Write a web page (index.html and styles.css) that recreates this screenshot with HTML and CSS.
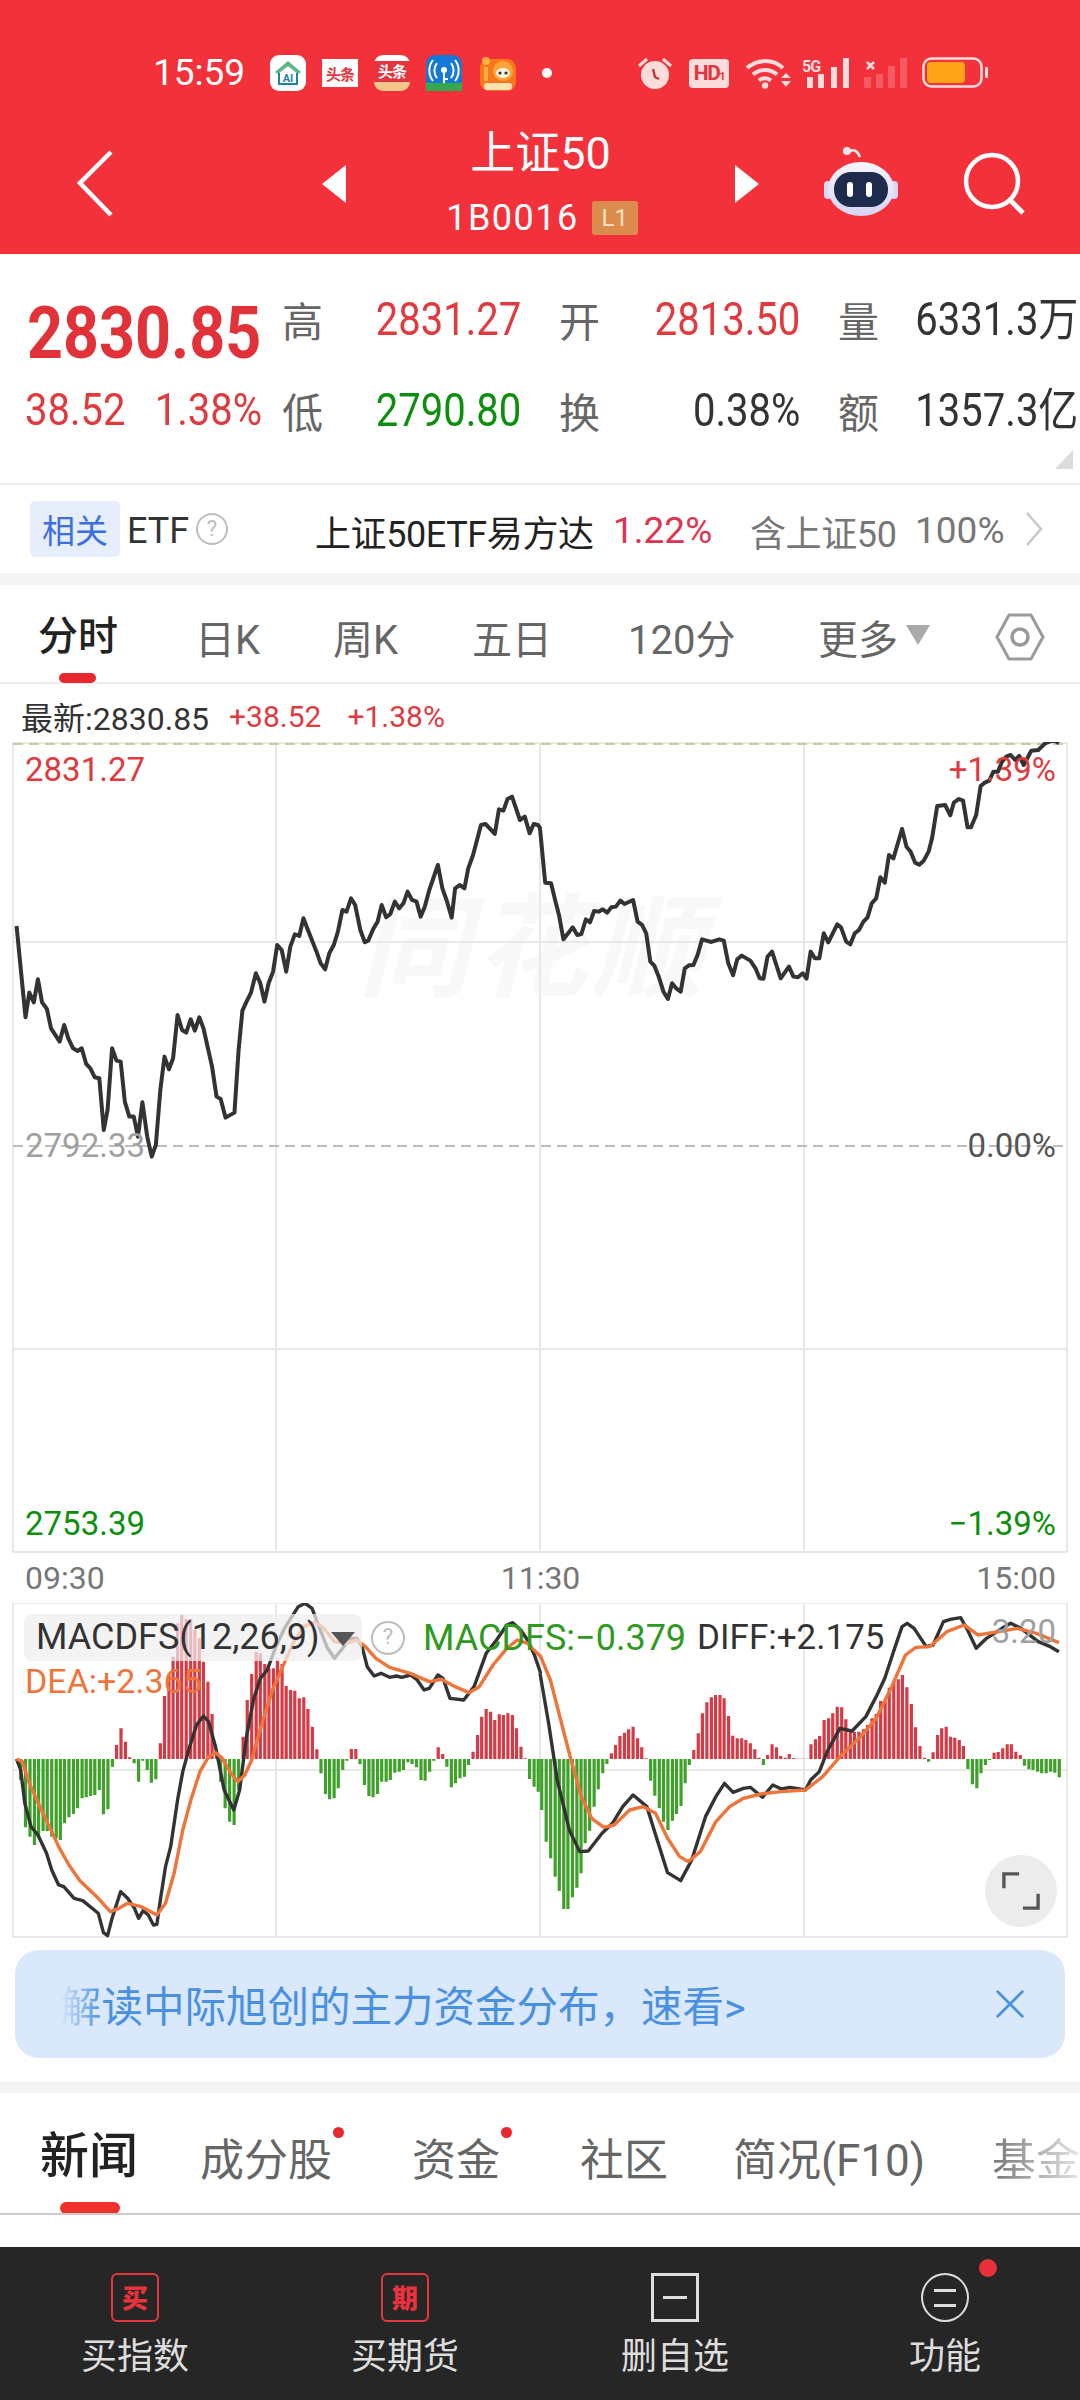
FILE: index.html
```html
<!DOCTYPE html>
<html lang="zh-CN">
<head>
<meta charset="utf-8">
<title>上证50</title>
<link rel="stylesheet" href="styles.css">
</head>
<body>
<div class="page">
  <header class="head">
    <div class="status">
      <span class="time">15:59</span>
      <div class="apps">
        <svg class="app" viewBox="0 0 36 36"><rect width="36" height="36" rx="9" fill="#fff"/><path d="M5 17 18 6l13 11-3 2-10-8-10 8z" fill="#5fb58a"/><path d="M9 18v11h18V18" fill="none" stroke="#1f7fb0" stroke-width="2"/><text x="18" y="27" class="t-ai">AI</text></svg>
        <div class="app toutiao"><span>头条</span></div>
        <div class="app toutiao2"><span>头条</span><i></i></div>
        <svg class="app" viewBox="0 0 36 36"><rect width="36" height="36" rx="9" fill="#1478d8"/><rect y="28" width="36" height="8" fill="#35a84f"/><circle cx="18" cy="15" r="3" fill="#fff"/><path d="M18 17v11M18 24h4M11 8a12 12 0 0 0 0 15M25 8a12 12 0 0 1 0 15M7 5a17 17 0 0 0 0 21M29 5a17 17 0 0 1 0 21" fill="none" stroke="#fff" stroke-width="2"/></svg>
        <svg class="app app5" viewBox="0 0 38 36"><rect x="2" y="4" width="36" height="32" rx="9" fill="#f7761e"/><circle cx="8" cy="6" r="4" fill="#ffb13c"/><rect x="6" y="12" width="4" height="14" fill="#ffb13c"/><circle cx="25" cy="16" r="10" fill="#ffa43a"/><ellipse cx="25" cy="18" rx="7" ry="5" fill="#fff3df"/><circle cx="22" cy="18" r="1.6" fill="#333"/><circle cx="28" cy="18" r="1.6" fill="#333"/><rect x="6" y="28" width="28" height="7" rx="3" fill="#ffe2b0"/></svg>
        <span class="dot"></span>
      </div>
      <div class="sys">
        <svg class="s-alarm" viewBox="0 0 34 34"><circle cx="17" cy="19" r="14" fill="#fddcdc"/><path d="M1 10 9 3M33 10 25 3" stroke="#fddcdc" stroke-width="3"/><path d="M15 13l2 8 4 2" fill="none" stroke="#c9323b" stroke-width="2.4"/></svg>
        <div class="s-hd">HD<small>1</small></div>
        <svg class="s-wifi" viewBox="0 0 46 32"><path d="M2 11a27 27 0 0 1 36 0M8 17.500a18 18 0 0 1 24 0M14 23.500a9 9 0 0 1 12 0" fill="none" stroke="#fddcdc" stroke-width="4"/><circle cx="20" cy="28.500" r="3.200" fill="#fddcdc"/><path d="M36 21h10l-5-5zM36 24h10l-5 6z" fill="#fddcdc"/></svg>
        <svg class="s-sig" viewBox="0 0 48 32"><text x="0" y="15" class="t-5g">5G</text><path d="M5 20h6v11H5zM16 17h6v14h-6zM29 10h6v21h-6zM41 1h6v30h-6z" fill="#fddcdc"/></svg>
        <svg class="s-sig2" viewBox="0 0 46 32"><path d="M4 5l7 7m0-7-7 7" stroke="#fddcdc" stroke-width="2.500"/><path d="M1 20h7v11H1zM13 17h7v14h-7zM25 9h7v22h-7zM37 1h7v30h-7z" fill="#fddcdc" opacity=".25"/></svg>
        <svg class="s-bat" viewBox="0 0 67 32"><rect x="1.500" y="1.500" width="58" height="28" rx="8" fill="none" stroke="#fddcdc" stroke-width="2.500"/><rect x="5" y="5" width="38" height="21" rx="4" fill="#ffa416"/><rect x="63" y="10" width="3" height="11" rx="1" fill="#fddcdc"/></svg>
      </div>
    </div>
    <div class="nav">
      <svg class="nav-back" viewBox="0 0 40 70"><path d="M35 3 4 34l31 32" fill="none" stroke="#fff" stroke-width="4.500"/></svg>
      <svg class="nav-tri" viewBox="0 0 24 38"><path d="M24 0v38L0 19z" fill="#fff"/></svg>
      <div class="nav-title">
        <div class="nav-name">上证50</div>
        <div class="nav-code">1B0016<span class="l1">L1</span></div>
      </div>
      <svg class="nav-tri" viewBox="0 0 24 38"><path d="M0 0v38l24-19z" fill="#fff"/></svg>
      <svg class="nav-robot" viewBox="0 0 76 72">
        <defs><linearGradient id="rb" x1="0" y1="0" x2="0" y2="1"><stop offset="0" stop-color="#f6f6ff"/><stop offset="1" stop-color="#d6d4f4"/></linearGradient></defs>
        <path d="M26 7q7-5 11 5" fill="none" stroke="#f2e6ea" stroke-width="2.500"/><circle cx="24" cy="6" r="4" fill="#f5e8ec"/>
        <rect x="1" y="36" width="8" height="18" rx="4" fill="#dcd9f5"/><rect x="67" y="36" width="8" height="18" rx="4" fill="#dcd9f5"/>
        <ellipse cx="38" cy="44" rx="33" ry="27" fill="url(#rb)"/>
        <rect x="11" y="27" width="54" height="35" rx="17" fill="#1f2b4c"/>
        <rect x="24" y="37" width="6" height="15" rx="3" fill="#fff"/><rect x="43" y="37" width="6" height="15" rx="3" fill="#fff"/>
      </svg>
      <svg class="nav-search" viewBox="0 0 64 64"><circle cx="29" cy="29" r="26" fill="none" stroke="#fff" stroke-width="4.500"/><path d="M47 48l13 13" stroke="#fff" stroke-width="5"/></svg>
    </div>
  </header>

  <section class="quote">
    <div class="q-price">2830.85</div>
    <div class="q-label">高</div><div class="q-val up">2831.27</div>
    <div class="q-label">开</div><div class="q-val up">2813.50</div>
    <div class="q-label">量</div><div class="q-val dark">6331.3万</div>
    <div class="q-chg"><span>38.52</span><span>1.38%</span></div>
    <div class="q-label">低</div><div class="q-val down">2790.80</div>
    <div class="q-label">换</div><div class="q-val dark">0.38%</div>
    <div class="q-label">额</div><div class="q-val dark">1357.3亿</div>
    <svg class="q-corner" viewBox="0 0 18 19"><path d="M18 0v19H0z" fill="#dcdcdc"/></svg>
  </section>

  <section class="etf">
    <span class="chip">相关</span>
    <span class="etf-word">ETF</span>
    <span class="qmark">?</span>
    <span class="etf-name">上证50ETF易方达</span>
    <span class="etf-pct">1.22%</span>
    <span class="etf-has">含上证50</span>
    <span class="etf-100">100%</span>
    <svg class="chev" viewBox="0 0 18 34"><path d="M2 1l14 16L2 33" fill="none" stroke="#c8c8c8" stroke-width="2.500"/></svg>
  </section>

  <div class="band"></div>

  <nav class="period">
    <span class="period-on">分时</span>
    <span>日K</span>
    <span>周K</span>
    <span>五日</span>
    <span>120分</span>
    <span class="more">更多<i class="caret"></i></span>
    <svg class="hex" viewBox="0 0 50 48"><path d="M14 2h22l12 22-12 22H14L2 24z" fill="none" stroke="#9a9a9a" stroke-width="3"/><circle cx="25" cy="24" r="8" fill="none" stroke="#9a9a9a" stroke-width="3.500"/></svg>
  </nav>

  <div class="info">
    <span class="info-now">最新:2830.85</span>
    <span class="info-up">+38.52</span>
    <span class="info-up">+1.38%</span>
  </div>

  <section class="main-chart">
    <svg class="canvas" viewBox="0 742 1080 811">
      <text x="358" y="988" class="mark">同花顺</text>
      <path class="grid" d="M13 743H1067V1552H13ZM276 743V1552M540 743V1552M804 743V1552M13 942H1067M13 1349H1067"/>
      <path class="dash-top" d="M13 744H1067"/>
      <path class="dash-mid" d="M13 1146H1067"/>
      <g transform="translate(0 690) scale(.3448 .3333)">
        <polyline class="price" points="48,708 74,982 85,908 98,937 110,868 122,937 136,957 148,1015 173,1055 186,1005 198,1045 212,1075 225,1083 237,1075 250,1122 262,1135 275,1162 288,1165 301,1320 312,1260 325,1075 338,1112 350,1115 362,1235 375,1280 388,1280 400,1340 413,1237 427,1340 440,1400 452,1365 465,1200 477,1100 490,1138 502,1105 515,975 528,1020 540,1028 553,988 565,1022 578,982 590,1015 615,1130 628,1220 640,1227 654,1283 680,1268 692,1080 703,962 715,935 728,908 742,850 755,880 767,935 779,880 792,845 804,765 817,780 830,845 842,770 855,733 868,738 880,685 893,720 918,785 930,820 943,838 955,790 968,765 980,725 993,660 1005,665 1018,625 1030,645 1045,720 1058,757 1068,752 1082,718 1095,695 1107,645 1120,682 1132,672 1145,635 1158,655 1170,640 1182,605 1195,630 1208,635 1220,680 1232,650 1245,600 1270,525 1283,595 1295,630 1310,683 1320,595 1333,585 1347,595 1358,535 1372,495 1395,405 1408,402 1435,432 1447,358 1460,362 1472,327 1485,320 1508,390 1522,380 1536,430 1548,402 1560,405 1568,417"/>
      </g>
      <g transform="translate(540 690) scale(.3448 .3333)">
        <polyline class="price" points="0,415 15,578 32,580 45,635 55,675 68,748 95,712 108,735 120,732 133,688 145,697 157,663 170,665 182,658 195,668 207,652 220,650 233,632 245,642 270,630 283,695 296,705 308,730 320,815 332,828 345,862 358,905 371,927 383,880 395,895 408,905 420,835 432,826 445,825 457,795 470,748 483,752 497,756 520,748 533,752 546,820 560,856 572,808 585,797 610,812 625,835 637,865 648,866 660,800 673,785 698,865 722,830 735,860 748,862 762,850 773,866 785,785 797,805 810,805 823,730 836,757 862,703 873,712 888,755 900,763 913,730 925,720 938,695 950,682 962,640 975,625 987,562 1000,578 1012,495 1025,505 1050,417 1063,470 1075,485 1088,518 1100,524 1113,512 1127,485 1137,445 1152,348 1175,345 1190,376 1200,338 1215,327 1227,332 1240,412 1250,412 1265,375 1278,288 1290,278 1303,272 1315,245 1328,245 1340,215 1352,200 1365,195 1378,210 1390,198 1403,225 1425,182 1445,180 1465,160 1490,150 1505,160"/>
      </g>
    </svg>
    <span class="lab lab-l lab-top up">2831.27</span>
    <span class="lab lab-r lab-top up">+1.39%</span>
    <span class="lab lab-l lab-mid grey">2792.33</span>
    <span class="lab lab-r lab-mid darkgrey">0.00%</span>
    <span class="lab lab-l lab-bot down">2753.39</span>
    <span class="lab lab-r lab-bot down">−1.39%</span>
  </section>

  <div class="times"><span>09:30</span><span>11:30</span><span>15:00</span></div>

  <section class="macd">
    <svg class="canvas" viewBox="0 1603 1080 335">
      <path class="grid" d="M13 1603H1067V1937H13ZM276 1603V1937M540 1603V1937M804 1603V1937M13 1770H1067"/>
      <g transform="translate(0 1590) scale(.3448 .3333)">
        <path class="bar-g" d="M60 507V570M74 507V712M87 507V740M100 507V765M112 507V735M125 507V723M137 507V723M150 507V740M163 507V745M175 507V750M187 507V700M200 507V682M213 507V672M225 507V655M238 507V625M250 507V622M263 507V618M275 507V615M288 507V600M300 507V673M313 507V658M326 507V530M389 507V520M402 507V575M414 507V512M427 507V540M439 507V578M452 507V568M640 507V575M653 507V655M666 507V695M679 507V705M692 507V600M931 507V550M944 507V612M956 507V628M969 507V625M981 507V595M994 507V540M1006 507V512M1044 507V523M1057 507V585M1070 507V618M1082 507V622M1095 507V612M1107 507V575M1120 507V575M1132 507V570M1145 507V548M1158 507V545M1170 507V540M1183 507V517M1195 507V522M1208 507V532M1221 507V570M1233 507V572M1246 507V545M1258 507V512M1296 507V530M1309 507V592M1321 507V580M1334 507V565M1347 507V560M1359 507V525M1536 507V567M1549 507V590M1561 507V605"/>
        <path class="bar-r" d="M338 507V465M351 507V415M364 507V455M376 507V502M465 507V460M477 507V318M490 507V255M502 507V200M515 507V100M527 507V75M540 507V87M553 507V87M565 507V120M578 507V145M590 507V215M603 507V275M615 507V372M628 507V490M705 507V440M717 507V330M730 507V252M743 507V185M755 507V190M768 507V222M780 507V235M793 507V235M805 507V212M818 507V222M830 507V288M843 507V300M855 507V302M868 507V325M881 507V322M893 507V357M906 507V410M919 507V478M1019 507V477M1032 507V477M1271 507V472M1284 507V492M1372 507V485M1385 507V435M1397 507V380M1410 507V357M1423 507V365M1435 507V390M1448 507V373M1460 507V375M1473 507V370M1486 507V375M1498 507V415M1511 507V470M1523 507V505"/>
        <polyline class="diff" points="48,507 60,540 72,640 90,710 110,735 135,790 150,840 170,885 185,890 215,925 240,932 285,970 300,1028 312,1037 325,985 350,905 370,925 390,955 402,985 415,962 430,975 445,1005 455,1003 465,930 480,830 495,770 515,630 530,545 550,470 570,405 590,378 605,395 625,470 650,600 678,660 695,600 715,440 735,330 755,265 775,240 800,170 825,115 865,50 885,40 905,55 925,110 950,175 970,205 990,180 1015,145 1035,145 1050,170 1065,230 1085,258 1105,250 1130,262 1150,258 1165,262 1190,255 1210,270 1230,300 1245,295 1270,255 1285,265 1305,325 1345,330 1375,290 1410,190 1440,150 1470,105 1487,98 1510,120 1530,150 1550,195 1568,250"/>
        <polyline class="dea" points="48,507 65,515 85,580 120,660 150,725 170,770 200,825 230,870 285,925 320,965 345,955 370,940 410,950 455,975 480,940 505,850 530,720 555,625 580,545 605,500 625,488 645,505 670,550 690,575 710,555 730,510 760,400 790,300 820,230 850,160 880,110 910,97 935,110 970,155 1000,160 1035,150 1060,170 1090,205 1130,232 1190,250 1245,275 1280,268 1320,290 1360,308 1390,290 1430,225 1470,175 1500,150 1530,160 1568,200"/>
      </g>
      <g transform="translate(540 1590) scale(.3448 .3333)">
        <path class="bar-g" d="M5 507V660M18 507V755M31 507V805M44 507V860M56 507V903M69 507V957M81 507V957M94 507V922M107 507V893M119 507V850M131 507V760M144 507V722M157 507V650M169 507V598M182 507V550M194 507V522M321 507V572M333 507V617M346 507V655M358 507V695M371 507V720M384 507V692M396 507V672M409 507V648M421 507V580M433 507V525M648 507V525M1127 507V515M1241 507V537M1254 507V583M1267 507V595M1279 507V550M1292 507V525M1304 507V510M1405 507V527M1418 507V538M1430 507V540M1443 507V545M1455 507V550M1468 507V550M1481 507V545M1493 507V548M1506 507V562"/>
        <path class="bar-r" d="M207 507V490M219 507V465M232 507V438M245 507V428M257 507V418M270 507V410M283 507V445M295 507V472M308 507V505M446 507V480M459 507V430M471 507V370M484 507V337M497 507V322M509 507V315M522 507V315M534 507V325M547 507V378M559 507V437M572 507V445M585 507V445M597 507V450M610 507V460M623 507V478M635 507V503M660 507V495M673 507V463M686 507V472M698 507V498M711 507V503M723 507V492M736 507V504M749 507V506M761 507V506M774 507V506M786 507V463M799 507V448M811 507V438M824 507V390M837 507V385M849 507V370M862 507V350M875 507V352M887 507V388M900 507V420M912 507V425M925 507V425M938 507V418M950 507V405M963 507V385M975 507V372M988 507V333M1001 507V333M1013 507V293M1026 507V272M1039 507V268M1051 507V255M1064 507V292M1077 507V342M1089 507V412M1102 507V468M1115 507V503M1140 507V487M1153 507V435M1165 507V415M1178 507V410M1191 507V440M1203 507V443M1216 507V450M1228 507V468M1317 507V488M1329 507V486M1342 507V475M1355 507V463M1367 507V463M1380 507V485M1393 507V495"/>
        <polyline class="diff" points="0,250 25,400 50,570 85,720 115,785 140,783 180,730 210,700 240,650 270,615 310,650 340,750 370,848 408,872 440,810 480,680 510,620 535,580 560,607 590,595 610,592 645,622 675,585 700,597 725,592 770,600 785,570 810,545 835,480 870,415 905,423 945,380 975,320 1000,265 1030,170 1050,110 1065,100 1085,115 1120,170 1140,165 1170,95 1190,88 1220,83 1240,120 1265,175 1295,145 1340,115 1365,100 1395,115 1445,155 1480,170 1505,185"/>
        <polyline class="dea" points="0,195 30,270 60,390 90,510 120,620 150,685 185,712 215,705 260,660 300,650 335,670 370,745 405,800 430,815 465,785 510,695 550,650 590,625 640,612 700,605 770,600 820,560 870,500 930,440 975,385 1020,290 1060,195 1090,172 1130,170 1180,125 1230,105 1270,135 1330,125 1385,115 1440,130 1505,158"/>
      </g>
    </svg>
    <div class="m-legend">
      <span class="m-select">MACDFS(12,26,9)<i class="m-caret"></i></span>
      <span class="qmark m-q">?</span>
      <span class="m-fs">MACDFS:−0.379</span>
      <span class="m-diff">DIFF:+2.175</span>
    </div>
    <span class="m-dea">DEA:+2.365</span>
    <span class="m-max">3.20</span>
    <div class="m-full"><svg viewBox="0 0 40 40"><path d="M2 17V2h16M38 23v15H22" fill="none" stroke="#555" stroke-width="3.500"/></svg></div>
  </section>

  <section class="banner">
    <span class="banner-text"><span class="fade-in">解</span>读中际旭创的主力资金分布，速看&gt;</span>
    <svg class="banner-x" viewBox="0 0 32 32"><path d="M2 2l28 28M30 2 2 30" stroke="#4a90e2" stroke-width="3"/></svg>
  </section>

  <div class="band band-2"></div>

  <nav class="sub">
    <span class="sub-on">新闻</span>
    <span class="has-dot">成分股</span>
    <span class="has-dot">资金</span>
    <span>社区</span>
    <span>简况(F10)</span>
    <span class="fade-out">基金</span>
  </nav>

  <div class="blank"></div>

  <footer class="bar">
    <div class="bar-item"><span class="bi-box bi-red">买</span><span>买指数</span></div>
    <div class="bar-item"><span class="bi-box bi-red">期</span><span>买期货</span></div>
    <div class="bar-item"><span class="bi-box bi-del"><i></i></span><span>删自选</span></div>
    <div class="bar-item"><span class="bi-box bi-fn"><i></i><i></i><b></b></span><span>功能</span></div>
  </footer>
</div>
</body>
</html>
```

FILE: styles.css
```css
* { box-sizing: border-box; }
html, body { margin: 0; padding: 0; background: #fff; }
body { font-family: Roboto, "Noto Sans CJK SC", sans-serif; color: #333; }
.page { width: 1080px; height: 2400px; overflow: hidden; display: flex; flex-direction: column; }

/* header */
.head { height: 254px; background: #f3313b; color: #fff; padding-top: 47px; flex: none; }
.status { height: 52px; display: flex; align-items: center; padding: 0 91px 0 153px; justify-content: space-between; }
.time { font-size: 37px; line-height: 52px; width: 117px; }
.apps { display: flex; align-items: center; gap: 16px; flex: 1; }
.app { width: 36px; height: 36px; display: block; flex: none; }
.app5 { width: 38px; }
.t-ai { font: 700 11px Roboto, sans-serif; fill: #1f7fb0; text-anchor: middle; }
.toutiao, .toutiao2 { display: flex; align-items: center; justify-content: center; font: 700 15px/1 "Noto Sans CJK SC", sans-serif; color: #e8323c; letter-spacing: -1px; overflow: hidden; position: relative; }
.toutiao { background: linear-gradient(#f3313b 10%, #fff 10%, #fff 90%, #f3313b 90%); }
.toutiao2 { border-radius: 9px; color: #fff; background: linear-gradient(#fff 18%, #e8323c 18%, #e8323c 75%, #f5c58a 75%); padding-bottom: 6px; }
.dot { width: 10px; height: 10px; background: #fff; border-radius: 50%; margin-left: 10px; }
.sys { display: flex; align-items: center; gap: 0; }
.s-alarm { width: 34px; height: 34px; margin-right: 17px; }
.s-hd { width: 40px; height: 29px; background: #fddcdc; border-radius: 4px; color: #e8323c; font: 700 21px/29px Roboto, sans-serif; text-align: center; letter-spacing: -1.5px; margin-right: 16px; }
.s-hd small { font-size: 11px; }
.s-wifi { width: 46px; height: 32px; margin-right: 11px; }
.s-sig { width: 48px; height: 32px; margin-right: 13px; }
.t-5g { font: 700 16px Roboto, sans-serif; fill: #fddcdc; letter-spacing: -1px; }
.s-sig2 { width: 46px; height: 32px; margin-right: 13px; }
.s-bat { width: 67px; height: 32px; }

.nav { height: 112px; margin-top: 27px; display: grid; grid-template-columns: 322px 24px 389px 24px 67px 72px 69px 60px; align-items: center; }
.nav-back { width: 40px; height: 70px; margin-left: 76px; }
.nav-tri { width: 24px; height: 38px; }
.nav-title { display: flex; flex-direction: column; align-items: center; }
.nav-name { font-size: 45px; line-height: 56px; }
.nav-code { font-size: 36px; line-height: 46px; display: flex; align-items: center; letter-spacing: 1.5px; margin: 13px 0 0 3px; }
.l1 { width: 46px; height: 34px; margin-left: 13px; background: #db8c4c; border-radius: 3px; font-size: 24px; line-height: 34px; text-align: center; color: #fbe3c8; letter-spacing: 0; }
.nav-robot { grid-column: 6; width: 76px; height: 72px; margin: -6px 0 0 -3px; }
.nav-search { grid-column: 8; width: 64px; height: 64px; margin-left: -4px; }

/* quote */
.quote { height: 229px; flex: none; padding: 40px 0 0 27px; display: grid; grid-template-columns: 255px 42px 197px 80px 199px 80px 198px; grid-template-rows: 50px 50px; row-gap: 41px; position: relative; align-items: center; }
.q-label { font: 400 41px/50px "Noto Sans CJK SC", sans-serif; color: #666; width: 42px; justify-self: end; }
.q-label:nth-child(2), .q-label:nth-child(9) { justify-self: start; }
.q-val { font-size: 46px; line-height: 50px; text-align: right; white-space: nowrap; transform: scaleX(.87); transform-origin: right center; justify-self: end; }
.q-val.dark { color: #333; }
.up { color: #e03a3e; }
.down { color: #0c8f0c; }
.q-price { font-size: 73px; line-height: 50px; color: #e03238; font-weight: 700; white-space: nowrap; margin-top: 28px; transform: scaleX(.86); transform-origin: left center; }
.q-chg { display: flex; gap: 32px; font-size: 44px; line-height: 50px; color: #e03a3e; white-space: nowrap; margin-left: -2px; transform: scaleX(.91); transform-origin: left center; }
.q-corner { position: absolute; right: 7px; bottom: 14px; width: 18px; height: 19px; }

/* etf */
.etf { height: 90px; flex: none; border-top: 2px solid #ececec; display: flex; align-items: center; padding-left: 30px; white-space: nowrap; }
.chip { width: 90px; height: 56px; background: #e6eefb; border-radius: 5px; color: #3e6fe0; font: 400 33px/56px "Noto Sans CJK SC", sans-serif; text-align: center; margin-right: 7px; }
.etf-word { font-size: 36px; width: 69px; padding-top: 3px; }
.qmark { width: 32px; height: 32px; border: 2px solid #bdbdbd; border-radius: 50%; color: #bdbdbd; font-size: 22px; line-height: 28px; text-align: center; flex: none; }
.etf-name { font-size: 36px; color: #222; margin-left: 87px; width: 298px; letter-spacing: -.4px; padding-top: 3px; }
.etf-pct { font-size: 37px; color: #e0334f; width: 137px; padding-top: 3px; }
.etf-has { font-size: 36px; color: #777; width: 165px; letter-spacing: -.4px; padding-top: 3px; }
.etf-100 { font-size: 37px; color: #777; width: 110px; padding-top: 3px; }
.chev { width: 18px; height: 34px; }

.band { height: 12px; background: #f4f4f4; flex: none; }

/* period */
.period { height: 99px; flex: none; border-bottom: 2px solid #ececec; padding-left: 38px; display: grid; grid-template-columns: 157px 138px 139px 156px 190px 172px 50px; align-items: center; font-size: 40px; color: #666; }
.period-on { color: #222; font-weight: 500; position: relative; align-self: stretch; line-height: 103px; }
.period-on::after { content: ""; position: absolute; left: 21px; top: 88px; width: 37px; height: 10px; background: #e8262c; border-radius: 5px; }
.more { display: flex; align-items: center; gap: 8px; }
.caret { width: 0; height: 0; border-left: 12px solid transparent; border-right: 12px solid transparent; border-top: 20px solid #aaa; margin-top: -4px; }
.hex { width: 50px; height: 48px; margin-left: 5px; }

/* chart */
.info { height: 58px; flex: none; display: flex; align-items: center; padding: 6px 0 0 21px; font-size: 30px; gap: 26px; }
.info-now { color: #333; width: 182px; font-size: 32px; white-space: nowrap; }
.info-up { color: #e03a3e; }
.main-chart { height: 811px; position: relative; flex: none; }
.canvas { position: absolute; left: 0; top: 0; width: 1080px; height: 100%; display: block; }
.mark { font: italic 700 112px "Noto Sans CJK SC", sans-serif; fill: #f8f8f8; letter-spacing: 5px; }
.grid { fill: none; stroke: #e8e8e8; stroke-width: 2; }
.dash-top { stroke: #c8b88a; stroke-width: 1.500; stroke-dasharray: 10 6; fill: none; }
.dash-mid { stroke: #a8a8a8; stroke-width: 1.500; stroke-dasharray: 10 6; fill: none; }
.price { fill: none; stroke: #333; stroke-width: 4; stroke-linejoin: round; vector-effect: non-scaling-stroke; }
.diff { fill: none; stroke: #333; stroke-width: 3.400; stroke-linejoin: round; vector-effect: non-scaling-stroke; }
.dea { fill: none; stroke: #f0743a; stroke-width: 3.400; stroke-linejoin: round; vector-effect: non-scaling-stroke; }
.bar-r { fill: none; stroke: #d63a45; stroke-width: 3.200; vector-effect: non-scaling-stroke; }
.bar-g { fill: none; stroke: #3fa02a; stroke-width: 3.200; vector-effect: non-scaling-stroke; }
.lab { position: absolute; font-size: 33px; line-height: 40px; }
.lab-l { left: 25px; }
.lab-r { right: 24px; }
.lab-top { top: 8px; }
.lab-mid { top: 384px; }
.lab-bot { top: 762px; }
.grey { color: #a0a0a0; }
.darkgrey { color: #555; }
.times { height: 50px; flex: none; display: flex; justify-content: space-between; align-items: center; padding: 0 24px 0 25px; font-size: 32px; color: #777; }

/* macd */
.macd { height: 335px; position: relative; flex: none; }
.m-legend { position: absolute; left: 24px; top: 11px; display: flex; align-items: center; height: 47px; white-space: nowrap; font-size: 36px; }
.m-select { width: 338px; height: 47px; background: rgba(238, 238, 238, .72); border-radius: 8px; padding-left: 12px; line-height: 47px; color: #333; position: relative; }
.m-caret { position: absolute; right: 7px; top: 18px; width: 0; height: 0; border-left: 12px solid transparent; border-right: 12px solid transparent; border-top: 14px solid #555; }
.m-q { width: 34px; height: 34px; margin-left: 9px; }
.m-fs { color: #2e9a1e; margin-left: 18px; }
.m-diff { color: #333; margin-left: 11px; font-size: 35px; }
.m-dea { position: absolute; left: 25px; top: 56px; color: #f0743a; font-size: 34px; line-height: 44px; }
.m-max { position: absolute; right: 24px; top: 9px; color: #a0a0a0; font-size: 33px; line-height: 40px; }
.m-full { position: absolute; left: 985px; top: 252px; width: 72px; height: 72px; background: #ececec; border-radius: 50%; display: flex; align-items: center; justify-content: center; }
.m-full svg { width: 38px; height: 38px; }

/* banner */
.banner { height: 108px; flex: none; margin: 12px 15px 24px; background: #d9e8fb; border-radius: 24px; display: flex; align-items: center; justify-content: space-between; padding: 0 40px 0 45px; }
.banner-text { font-size: 41.500px; color: #4a90e2; white-space: nowrap; }
.fade-in { background: linear-gradient(90deg, #d9e8fb, #4a90e2); -webkit-background-clip: text; background-clip: text; color: transparent; }
.banner-x { width: 30px; height: 30px; }
.band-2 { height: 11px; }

/* sub tabs */
.sub { height: 122px; flex: none; border-bottom: 2px solid #ccc; padding-left: 40px; display: grid; grid-template-columns: 160px 212px 168px 153px 259px 88px; align-items: center; font-size: 44px; color: #666; overflow: hidden; }
.sub span { white-space: nowrap; justify-self: start; }
.sub-on { font-size: 49px; font-weight: 500; color: #222; position: relative; align-self: stretch; line-height: 128px; }
.sub-on::after { content: ""; position: absolute; left: 20px; top: 109px; width: 60px; height: 12px; background: #f0302c; border-radius: 6px; }
.has-dot { position: relative; }
.has-dot::after { content: ""; position: absolute; right: -12px; top: 2px; width: 11px; height: 11px; border-radius: 50%; background: #e8262c; }
.fade-out { background: linear-gradient(90deg, #777, #e6e6e6); -webkit-background-clip: text; background-clip: text; color: transparent; }
.blank { height: 32px; flex: none; }

/* bottom bar */
.bar { height: 153px; flex: none; background: #262626; display: grid; grid-template-columns: repeat(4, 270px); padding-top: 26px; }
.bar-item { display: flex; flex-direction: column; align-items: center; font-size: 36px; line-height: 44px; color: #ddd; gap: 13px; }
.bi-box { width: 48px; height: 49px; display: block; flex: none; position: relative; }
.bi-red { border: 2.500px solid #e4383e; border-radius: 6px; color: #e8323c; font: 900 26px/44px "Noto Sans CJK SC", sans-serif; text-align: center; }
.bi-del { border: 3px solid #ddd; }
.bi-del i { position: absolute; left: 9px; top: 20px; width: 24px; height: 3px; background: #ddd; }
.bi-fn { border: 2.500px solid #ddd; border-radius: 50%; }
.bi-fn i { position: absolute; left: 11px; top: 14px; width: 22px; height: 3px; background: #ddd; }
.bi-fn i + i { top: 29px; }
.bi-fn b { position: absolute; left: 56px; top: -16px; width: 18px; height: 18px; border-radius: 50%; background: #e8303a; }
```
